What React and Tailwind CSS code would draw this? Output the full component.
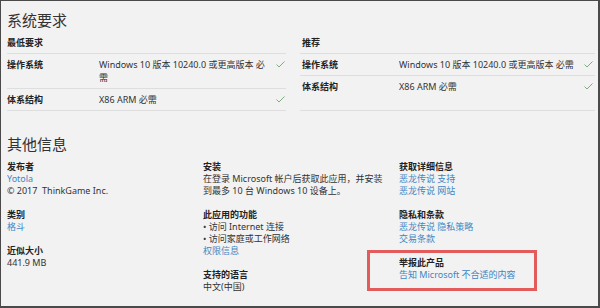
import React from "react";

const FONT = { fontFamily: '"Noto Sans", "Noto Sans CJK SC", sans-serif' };

function Check() {
  return (
    <svg width="9" height="7" viewBox="0 0 9 7" className="block">
      <polyline points="0.5,3.5 3,6 8.5,0.5" fill="none" stroke="#7aae7a" strokeWidth="1" />
    </svg>
  );
}

function Row({ label, labelW, children }) {
  return (
    <div className="flex border-t border-[#dedede] pt-[4px] pb-[4px] leading-[13px]">
      <div className={`${labelW} shrink-0 font-bold text-[#222]`}>{label}</div>
      <div className="flex-1 text-[#333]">{children}</div>
      <div className="w-[12px] pt-[3px] flex justify-end pr-[1px]">
        <Check />
      </div>
    </div>
  );
}

function Link({ children }) {
  return <div className="text-[#3d86c3]">{children}</div>;
}

function H({ children }) {
  return <div className="font-bold text-[#222]">{children}</div>;
}

export default function App() {
  return (
    <div
      style={FONT}
      className="w-[600px] h-[308px] overflow-hidden bg-[#f2f2f2] border-t border-l border-r-2 border-b-2 border-[#4a4a4a] text-[9px] text-[#333] pl-[6px]"
    >
      <div className="pt-[9px] text-[15px] leading-[20px] text-[#333]">系统要求</div>

      <div className="mt-[6px] grid grid-cols-[279px_295px] gap-x-[14px]">
        <div className="flex flex-col border-b border-[#dedede]">
          <div className="pb-[4px] leading-[13px] font-bold text-[#222]">最低要求</div>
          <Row label="操作系统" labelW="w-[92px]">
            Windows 10 版本 10240.0 或更高版本 必
            <br />需
          </Row>
          <Row label="体系结构" labelW="w-[92px]">X86 ARM 必需</Row>
        </div>
        <div className="flex flex-col border-b border-[#dedede]">
          <div className="pb-[4px] pl-[2px] leading-[13px] font-bold text-[#222]">推荐</div>
          <div className="pl-[2px] border-t border-[#dedede] pt-[4px] pb-[4px] leading-[13px] flex">
            <div className="w-[97px] shrink-0 font-bold text-[#222]">操作系统</div>
            <div className="flex-1 whitespace-nowrap">Windows 10 版本 10240.0 或更高版本 必需</div>
            <div className="w-[12px] pt-[3px] flex justify-end pr-[2px]">
              <Check />
            </div>
          </div>
          <div className="pl-[2px] border-t border-[#dedede] pt-[4px] pb-[4px] leading-[13px] flex">
            <div className="w-[97px] shrink-0 font-bold text-[#222]">体系结构</div>
            <div className="flex-1">X86 ARM 必需</div>
            <div className="w-[12px] pt-[3px] flex justify-end pr-[2px]">
              <Check />
            </div>
          </div>
        </div>
      </div>

      <div className="mt-[23px] text-[15px] leading-[20px] text-[#333]">其他信息</div>

      <div className="mt-[7px] grid grid-cols-[196px_196px_196px] leading-[12px]">
        <div className="flex flex-col gap-[12px]">
          <div>
            <H>发布者</H>
            <Link>Yotola</Link>
            <div>© 2017&nbsp;&nbsp;ThinkGame Inc.</div>
          </div>
          <div>
            <H>类别</H>
            <Link>格斗</Link>
          </div>
          <div>
            <H>近似大小</H>
            <div>441.9 MB</div>
          </div>
        </div>

        <div className="flex flex-col gap-[12px]">
          <div>
            <H>安装</H>
            <div>在登录 Microsoft 帐户后获取此应用，并安装</div>
            <div>到最多 10 台 Windows 10 设备上。</div>
          </div>
          <div>
            <H>此应用的功能</H>
            <div>• 访问 Internet 连接</div>
            <div>• 访问家庭或工作网络</div>
            <Link>权限信息</Link>
          </div>
          <div>
            <H>支持的语言</H>
            <div>中文(中国)</div>
          </div>
        </div>

        <div className="flex flex-col gap-[12px]">
          <div>
            <H>获取详细信息</H>
            <Link>恶龙传说 支持</Link>
            <Link>恶龙传说 网站</Link>
          </div>
          <div>
            <H>隐私和条款</H>
            <Link>恶龙传说 隐私策略</Link>
            <Link>交易条款</Link>
          </div>
          <div className="relative">
            <H>举报此产品</H>
            <Link>告知 Microsoft 不合适的内容</Link>
            <div className="absolute left-[-32px] top-[-7px] w-[170px] h-[41px] border-[3px] border-[#e35b5b] pointer-events-none" />
          </div>
        </div>
      </div>
    </div>
  );
}
